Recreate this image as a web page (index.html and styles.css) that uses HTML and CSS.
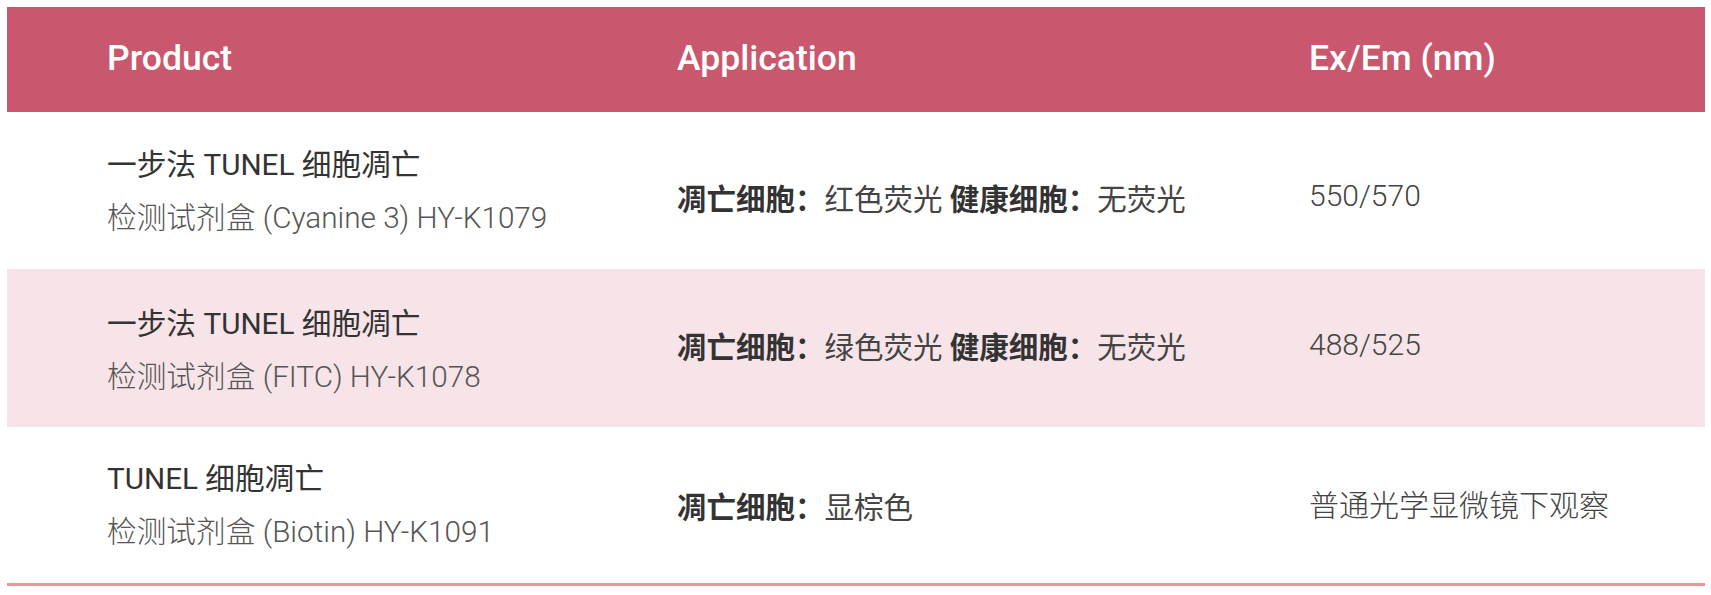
FILE: index.html
```html
<!DOCTYPE html>
<html lang="zh-CN">
<head>
<meta charset="utf-8">
<title>TUNEL Products</title>
<link rel="stylesheet" href="styles.css">
</head>
<body>
<div class="table">
  <div class="row head">
    <div class="cell">Product</div>
    <div class="cell">Application</div>
    <div class="cell">Ex/Em (nm)</div>
  </div>
  <div class="row r1">
    <div class="cell product">
      <div class="name">一步法 TUNEL 细胞凋亡</div>
      <div class="sub">检测试剂盒 (Cyanine 3) HY-K1079</div>
    </div>
    <div class="cell app"><b>凋亡细胞：</b>红色荧光 <b>健康细胞：</b>无荧光</div>
    <div class="cell ex">550/570</div>
  </div>
  <div class="row r2 alt">
    <div class="cell product">
      <div class="name">一步法 TUNEL 细胞凋亡</div>
      <div class="sub">检测试剂盒 (FITC) HY-K1078</div>
    </div>
    <div class="cell app"><b>凋亡细胞：</b>绿色荧光 <b>健康细胞：</b>无荧光</div>
    <div class="cell ex">488/525</div>
  </div>
  <div class="row r3 last">
    <div class="cell product">
      <div class="name">TUNEL 细胞凋亡</div>
      <div class="sub">检测试剂盒 (Biotin) HY-K1091</div>
    </div>
    <div class="cell app"><b>凋亡细胞：</b>显棕色</div>
    <div class="cell ex">普通光学显微镜下观察</div>
  </div>
</div>
</body>
</html>
```

FILE: styles.css
```css
html, body {
  margin: 0;
  padding: 0;
  background: #ffffff;
}
body {
  padding: 7px 6px 0 7px;
  font-family: Roboto, "Noto Sans CJK SC", sans-serif;
}
.table {
  display: flex;
  flex-direction: column;
}
.row {
  display: grid;
  grid-template-columns: 570px 632px 1fr;
  align-items: center;
  height: 157px;
  background: #ffffff;
}
.row.alt {
  background: #f7e4e8;
  height: 158px;
}
.row.last {
  height: 156px;
  border-bottom: 3px solid #f39196;
}
.row.head {
  height: 105px;
  background: #c9576d;
  color: #ffffff;
  font-weight: 500;
  font-size: 35.5px;
}
.cell {
  padding-left: 100px;
}
.row.head .cell {
  padding-bottom: 4px;
}
.product {
  font-size: 29.7px;
  line-height: 53px;
}
.r2 .product {
  padding-top: 4px;
}
.name {
  color: #333333;
}
.sub {
  color: #555555;
  font-weight: 300;
}
.app {
  font-size: 29.5px;
  color: #444444;
}
.app b {
  font-weight: 700;
  color: #333333;
}
.ex {
  font-size: 30px;
  color: #444444;
  font-weight: 300;
}
.r1 .app {
  padding-top: 12px;
}
.r1 .ex {
  padding-top: 10px;
}
.r2 .app {
  padding-bottom: 7px;
}
.r2 .ex {
  padding-bottom: 7px;
}
.r3 .ex {
  padding-bottom: 5px;
}
```
